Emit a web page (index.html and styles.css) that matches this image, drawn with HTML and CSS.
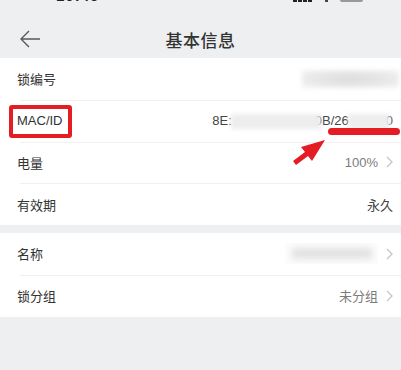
FILE: index.html
```html
<!DOCTYPE html>
<html lang="zh-CN">
<head>
    <meta charset="UTF-8">
    <meta name="viewport" content="width=device-width, initial-scale=1.0">
    <title>基本信息</title>
    <link rel="stylesheet" href="styles.css">
</head>
<body>
    <div class="status">
        <span class="time">10:45</span>
        <span class="status-icons">
            <span class="signal"></span>
            <span class="wifi"></span>
            <span class="battery"></span>
        </span>
    </div>

    <header class="nav">
        <svg class="back" width="22" height="18" viewBox="0 0 22 18">
            <path d="M21 9H2M10 1L2 9l8 8" fill="none" stroke="#5a5a5a" stroke-width="1.4"/>
        </svg>
        <h1>基本信息</h1>
        <span></span>
    </header>

    <!-- 锁信息 -->
    <div class="group">
        <div class="row">
            <span class="label">锁编号</span>
            <span class="blur blur-id"></span>
        </div>
        <div class="row">
            <span class="label">MAC/ID</span>
            <span class="value value-dark">8E:<span class="blur blur-a"></span>0B/26<span class="blur blur-b"></span>0</span>
            <span class="mark-box"></span>
            <span class="mark-line"></span>
            <svg class="mark-arrow" width="40" height="30" viewBox="0 0 40 30">
                <polygon points="37,4 13,11 17,16 5,25 8,29 20,20 24,25" fill="#e41d25"/>
            </svg>
        </div>
        <div class="row">
            <span class="label">电量</span>
            <span class="value">100%</span>
            <svg class="chevron" width="7" height="12" viewBox="0 0 7 12"><path d="M1 1l5 5-5 5" fill="none" stroke="#c4c4c4" stroke-width="1.3"/></svg>
        </div>
        <div class="row">
            <span class="label">有效期</span>
            <span class="value value-dark">永久</span>
        </div>
    </div>

    <!-- 锁设置 -->
    <div class="group">
        <div class="row">
            <span class="label">名称</span>
            <span class="blur-wrap"><span class="blur blur-name"></span></span>
            <svg class="chevron" width="7" height="12" viewBox="0 0 7 12"><path d="M1 1l5 5-5 5" fill="none" stroke="#c4c4c4" stroke-width="1.3"/></svg>
        </div>
        <div class="row">
            <span class="label">锁分组</span>
            <span class="value">未分组</span>
            <svg class="chevron" width="7" height="12" viewBox="0 0 7 12"><path d="M1 1l5 5-5 5" fill="none" stroke="#c4c4c4" stroke-width="1.3"/></svg>
        </div>
    </div>
</body>
</html>
```

FILE: styles.css
```css
* { margin: 0; padding: 0; box-sizing: border-box; }
body {
    font-family: "Liberation Sans", "Noto Sans CJK SC", sans-serif;
    background: #eeeff1;
    color: #333;
    width: 401px;
    min-height: 370px;
}

/* status bar, only the bottom of the glyphs is visible */
.status { height: 20px; overflow: hidden; display: flex; justify-content: space-between; padding: 0 38px 0 56px; }
.time { font-size: 15px; font-weight: bold; color: #222; margin-top: -13px; letter-spacing: 1px; }
.status-icons { display: flex; gap: 12px; align-items: flex-start; }
.signal { width: 20px; height: 2px; background: repeating-linear-gradient(90deg, #222 0 4px, transparent 4px 5px); }
.wifi { width: 3px; height: 2px; background: #444; }
.battery { width: 23px; height: 2px; background: #999; border-radius: 0 0 2px 2px; }

.nav { height: 38px; display: grid; grid-template-columns: 1fr auto 1fr; align-items: center; padding: 0 19px; }
.nav h1 { font-size: 17px; font-weight: 500; color: #333; letter-spacing: 0.5px; }
.back { display: block; }

.group { background: #fff; margin-bottom: 8px; }
.row {
    position: relative;
    height: 41.75px;
    display: flex;
    align-items: center;
    padding: 0 8px 0 17px;
    font-size: 13px;
}
.row + .row::before {
    content: "";
    position: absolute;
    left: 20px; right: 0; top: 0;
    height: 1px;
    background: #f1f1f1;
}
.label { flex: 1; color: #333; }
.value { color: #7c7c7c; white-space: nowrap; }
.value-dark { color: #444; }
.chevron { margin-left: 8px; display: block; }

/* masked values */
.blur { display: inline-block; vertical-align: middle; filter: blur(2px); }
.blur-id {
    width: 97px; height: 18px; margin-right: -6px;
    background: radial-gradient(ellipse at center, #dcdcdc 0%, #e8e8e8 55%, #f5f5f5 100%);
}
.blur-a { width: 90px; height: 15px; background: #ededed; margin: 0 -6px 0 -1px; }
.blur-b { width: 42px; height: 15px; background: #ededed; margin: 0 -4px 0 -1px; }
.blur-wrap { display: flex; align-items: center; justify-content: center; width: 93px; height: 21px; background: #fcfcfc; }
.blur-name { width: 80px; height: 11px; background: #e2e2e2; filter: blur(3px); }

/* red annotations drawn over the screenshot */
.mark-box {
    position: absolute;
    left: 9px; top: 5px;
    width: 63px; height: 33px;
    border: 4px solid #e41d25;
    border-radius: 3px;
    z-index: 2;
}
.mark-line {
    position: absolute;
    left: 328px; top: 28px;
    width: 72px; height: 7px;
    background: #e41d25;
    border-radius: 4px;
    z-index: 2;
}
.mark-arrow { position: absolute; left: 288px; top: 36px; z-index: 2; }
```
